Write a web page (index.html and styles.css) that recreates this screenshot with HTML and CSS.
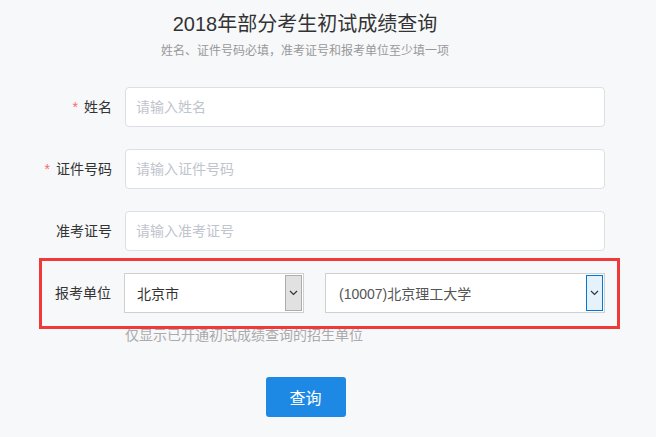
FILE: index.html
```html
<!DOCTYPE html>
<html lang="zh-CN">
<head>
    <meta charset="UTF-8">
    <meta name="viewport" content="width=device-width, initial-scale=1.0">
    <title>2018年部分考生初试成绩查询</title>
    <link rel="stylesheet" href="styles.css">
</head>
<body>

    <div class="container">
        <h1 class="title">2018年部分考生初试成绩查询</h1>
        <p class="subtitle">姓名、证件号码必填，准考证号和报考单位至少填一项</p>

        <form class="form">
            <div class="form-item">
                <label class="label required">姓名</label>
                <input class="input" type="text" placeholder="请输入姓名">
            </div>

            <div class="form-item">
                <label class="label required">证件号码</label>
                <input class="input" type="text" placeholder="请输入证件号码">
            </div>

            <div class="form-item">
                <label class="label">准考证号</label>
                <input class="input" type="text" placeholder="请输入准考证号">
            </div>

            <div class="form-item unit">
                <label class="label">报考单位</label>
                <div class="selects">
                    <div class="select province">
                        <span class="select-text">北京市</span>
                        <span class="select-arrow">
                            <svg width="9" height="6" viewBox="0 0 9 6"><path d="M1 1 L4.5 4.5 L8 1" fill="none" stroke="#333" stroke-width="1.2"/></svg>
                        </span>
                    </div>
                    <div class="select school">
                        <span class="select-text">(10007)北京理工大学</span>
                        <span class="select-arrow active">
                            <svg width="9" height="6" viewBox="0 0 9 6"><path d="M1 1 L4.5 4.5 L8 1" fill="none" stroke="#333" stroke-width="1.2"/></svg>
                        </span>
                    </div>
                </div>
                <div class="highlight"></div>
            </div>

            <p class="hint">仅显示已开通初试成绩查询的招生单位</p>

            <div class="actions">
                <button type="button" class="btn">查询</button>
            </div>
        </form>
    </div>

</body>
</html>
```

FILE: styles.css
```css
body {
    margin: 0;
    background-color: #f7f8fa;
    font-family: "Liberation Sans", "Noto Sans CJK SC", sans-serif;
    color: #333;
}

.container {
    width: 600px;
    margin-left: 5px;
    padding-top: 10px;
}

.title {
    margin: 0;
    font-size: 20px;
    font-weight: normal;
    line-height: 28px;
    text-align: center;
    color: #333;
}

.subtitle {
    margin: 3px 0 0;
    font-size: 12px;
    line-height: 20px;
    text-align: center;
    color: #999;
}

.form {
    margin-top: 26px;
}

.form-item {
    display: flex;
    align-items: center;
    height: 40px;
    margin-bottom: 22px;
}

.label {
    width: 120px;
    padding-right: 13px;
    box-sizing: border-box;
    text-align: right;
    font-size: 14px;
    line-height: 40px;
    color: #333;
}

.required::before {
    content: "*";
    color: #f56c6c;
    margin-right: 6px;
}

.input {
    width: 480px;
    height: 40px;
    box-sizing: border-box;
    padding: 0 10px;
    border: 1px solid #dcdfe6;
    border-radius: 4px;
    background: #fff;
    font-family: inherit;
    font-size: 14px;
    color: #333;
    outline: none;
}

.input::placeholder {
    color: #c0c4cc;
}

.unit {
    position: relative;
    margin-bottom: 0;
}

.selects {
    display: flex;
    gap: 21px;
}

.select {
    display: flex;
    align-items: center;
    justify-content: space-between;
    height: 40px;
    box-sizing: border-box;
    border: 1px solid #d0d0d0;
    background: #fff;
    padding: 1px;
}

.province {
    width: 180px;
}

.school {
    width: 280px;
}

.select-text {
    font-size: 14px;
    padding-left: 11px;
}

.province .select-text {
    color: #333;
}

.school .select-text {
    padding-left: 12px;
    color: #555;
}

.select-arrow {
    display: flex;
    align-items: center;
    justify-content: center;
    width: 17px;
    height: 100%;
    box-sizing: border-box;
    background: #e1e1e1;
    border: 1px solid #adadad;
}

.select-arrow.active {
    background: #e5f1fb;
    border-color: #0078d7;
}

.highlight {
    position: absolute;
    left: 34px;
    top: -15px;
    width: 581px;
    height: 71px;
    box-sizing: border-box;
    border: 3px solid #f03a3a;
    pointer-events: none;
}

.hint {
    margin: 12px 0 0 120px;
    font-size: 14px;
    line-height: 20px;
    color: #aaa;
}

.actions {
    display: flex;
    justify-content: center;
    margin-top: 32px;
}

.btn {
    width: 80px;
    height: 40px;
    margin-left: 1px;
    border: none;
    border-radius: 3px;
    background-color: #1e88e5;
    color: #fff;
    font-family: inherit;
    font-size: 16px;
    cursor: pointer;
}
```
